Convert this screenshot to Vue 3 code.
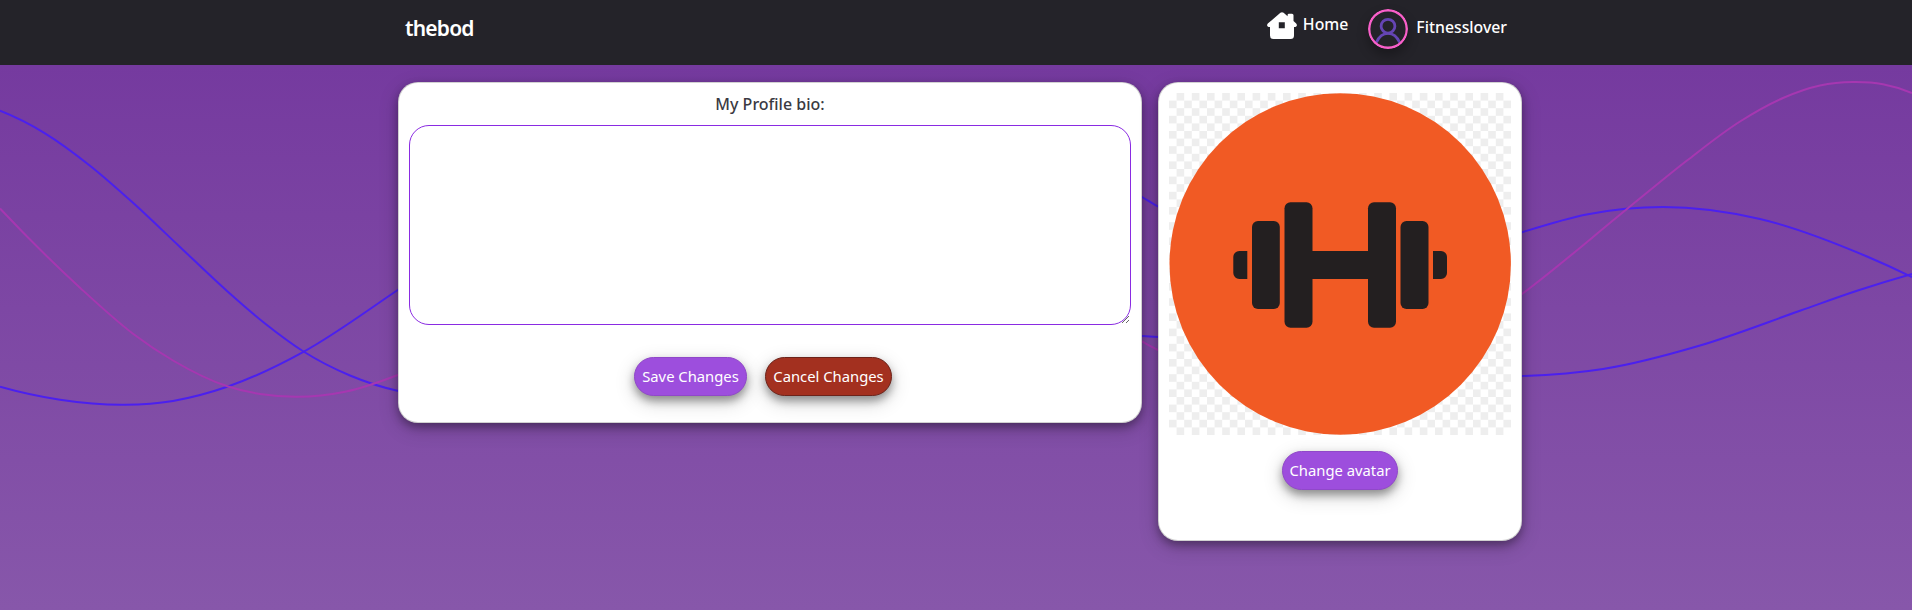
<script setup>
const waves = [
  { tone: 'blue', points: [[0, 110.7], [45, 133.3], [90, 165.7], [133, 202.800], [180, 247], [227, 291], [265, 323.5], [303.5, 351.5], [350, 375.5], [398.5, 391], [470, 396], [600, 370], [860, 330], [1000, 333], [1142, 336], [1158, 337], [1300, 352], [1440, 374], [1522, 376], [1603, 369], [1700, 345.5], [1800, 310.8], [1857, 290.800], [1912, 274]] },
  { tone: 'blue', points: [[0, 386.7], [60, 399.7], [125, 404.800], [173, 400.9], [228, 386.5], [303.5, 351.8], [398.5, 289.5], [500, 220], [700, 120], [900, 100], [1060, 152], [1142, 197], [1158, 206.5], [1250, 250], [1380, 270], [1470, 250], [1522, 232.3], [1588, 214.2], [1663, 207], [1760, 219], [1867, 256.500], [1912, 277]] },
  { tone: 'pink', points: [[0, 208.5], [80, 287.7], [133, 333.7], [173, 360.5], [228, 386.5], [260, 394], [297, 396.7], [345, 391.7], [398.5, 374.7], [520, 310], [700, 220], [900, 220], [1060, 295], [1142, 341.5], [1158, 350], [1260, 385], [1400, 370], [1470, 331], [1522, 294], [1627, 209], [1687, 160.5], [1740, 121.5], [1783, 98], [1820, 85.500], [1853, 82], [1883, 84.2], [1912, 93]] },
]

// Smooth curve through every point: one cubic per segment, tangents weighted by spacing.
function curve(p) {
  const n = p.length - 1
  const s = [], m = []
  for (let i = 0; i < n; i++) s.push((p[i + 1][1] - p[i][1]) / (p[i + 1][0] - p[i][0]))
  for (let i = 1; i < n; i++) {
    const l = p[i][0] - p[i - 1][0], r = p[i + 1][0] - p[i][0]
    m[i] = (s[i - 1] * r + s[i] * l) / (l + r)
  }
  m[0] = 2 * s[0] - m[1]
  m[n] = 2 * s[n - 1] - m[n - 1]
  let d = `M${p[0][0]} ${p[0][1]}`
  for (let i = 0; i < n; i++) {
    const [ax, ay] = p[i], [bx, by] = p[i + 1]
    const h = (bx - ax) / 3
    d += `C${ax + h} ${ay + m[i] * h} ${bx - h} ${by - m[i + 1] * h} ${bx} ${by}`
  }
  return d
}
</script>

<template>
  <div class="page">
    <svg class="waves" viewBox="0 0 1912 610" aria-hidden="true">
      <path v-for="(w, i) in waves" :key="i" :class="w.tone" :d="curve(w.points)" />
    </svg>
    <header class="nav">
      <div class="nav-inner">
        <a class="brand">thebod</a>
        <nav class="links">
          <a class="home">
            <svg width="30" height="28" viewBox="0 0 30 28" aria-hidden="true">
              <path fill="#fff" fill-rule="evenodd" d="M13.400 .8Q15 -.5 16.600 .8L20.600 4.200V3Q20.600 1.700 22 1.700H25Q26.500 1.700 26.500 3.200V9L29.200 11.600Q31 14 28.400 15H27V23.500Q27 27 23.500 27H6.500Q3 27 3 23.500V15H1.600Q-1 14 .8 11.600ZM11.800 10.300V16.300H17.800V10.300Z" />
            </svg>
            <span>Home</span>
          </a>
          <a class="user">
            <svg class="face" width="40" height="40" viewBox="0 0 40 40" aria-hidden="true">
              <circle cx="20" cy="20" r="18.800" fill="#242329" />
              <g fill="none" stroke="#6545b4" stroke-width="2.800">
                <circle cx="20" cy="17.200" r="6.900" />
                <path d="M8.300 33.500C11 27.500 15 24.300 20 24.300S29 27.500 31.700 33.500" />
              </g>
              <circle cx="20" cy="20" r="18.800" fill="none" stroke="#f95fc9" stroke-width="2.400" />
            </svg>
            <span>Fitnesslover</span>
          </a>
        </nav>
      </div>
    </header>
    <main class="cards">
      <section class="card bio">
        <label class="bio-label" for="bio">My Profile bio:</label>
        <textarea id="bio"></textarea>
        <div class="actions">
          <button class="btn save">Save Changes</button>
          <button class="btn cancel">Cancel Changes</button>
        </div>
      </section>
      <section class="card avatar">
        <svg class="picture" width="342" height="342" viewBox="0 0 342 342" aria-hidden="true">
          <defs>
            <pattern id="check" width="15.200" height="15.200" patternUnits="userSpaceOnUse">
              <rect width="15.200" height="15.200" fill="#fff" />
              <path fill="#eee" d="M7.600 0h7.600v7.600h-7.600zM0 7.600h7.600v7.600H0z" />
            </pattern>
          </defs>
          <rect width="342" height="342" fill="url(#check)" />
          <circle cx="171.200" cy="171" r="170.700" fill="#f15a24" />
          <g fill="#231f20">
            <path d="M78.300 158v28H70.300a6 6 0 0 1-6-6v-16a6 6 0 0 1 6-6zM264 158v28h8a6 6 0 0 0 6-6v-16a6 6 0 0 0-6-6z" />
            <rect x="83" y="128" width="27.800" height="88" rx="6" />
            <rect x="115.500" y="109.300" width="28" height="125.400" rx="6" />
            <rect x="199" y="109.300" width="28" height="125.400" rx="6" />
            <rect x="231.500" y="128" width="28" height="88" rx="6" />
            <rect x="140" y="158" width="62" height="28" />
          </g>
        </svg>
        <button class="btn change">Change avatar</button>
      </section>
    </main>
  </div>
</template>

<style>
body {
  margin: 0;
}
</style>

<style scoped>
.page {
  position: relative;
  height: 610px;
  overflow: hidden;
  background: linear-gradient(#753a9f 65px, #8757aa 610px);
  font-family: "Noto Sans", sans-serif;
}
.waves {
  position: absolute;
  inset: 0;
  width: 1912px;
  height: 610px;
}
.waves path {
  fill: none;
  stroke-width: 2;
}
.waves .blue {
  stroke: #4b20ee;
}
.waves .pink {
  stroke: #a637b1;
}
.nav {
  position: relative;
  height: 65px;
  background: #242329;
}
.nav-inner {
  display: flex;
  justify-content: space-between;
  width: 1102px;
  margin-left: 405px;
  color: #fff;
}
.brand {
  margin-top: 15px;
  font-size: 21px;
  line-height: 27px;
  font-weight: 600;
  letter-spacing: -0.8px;
}
.links {
  display: flex;
  align-items: flex-start;
}
.home {
  display: flex;
  gap: 6px;
  margin-top: 12px;
  font-size: 15.800px;
  line-height: 25px;
  font-weight: 500;
}
.user {
  display: flex;
  gap: 8px;
  margin: 9px 0 0 20px;
  font-size: 15.800px;
  line-height: 37px;
  font-weight: 500;
}
.face {
  border-radius: 50%;
  box-shadow: 0 6px 12px rgba(0, 0, 0, 0.3);
}
.cards {
  position: relative;
  display: flex;
  align-items: flex-start;
  gap: 16px;
  margin: 17px 0 0 398px;
}
.card {
  box-sizing: border-box;
  display: flex;
  flex-direction: column;
  align-items: center;
  border: 1px solid rgba(0, 0, 0, 0.18);
  border-radius: 20px;
  background: #fff;
  box-shadow: 0 4px 8px rgba(0, 0, 0, 0.3), 0 6px 20px rgba(0, 0, 0, 0.19);
}
.bio {
  width: 744px;
  height: 341px;
}
.bio-label {
  margin-top: 9px;
  color: #3a3a42;
  font-size: 16px;
  line-height: 25px;
  font-weight: 500;
}
textarea {
  box-sizing: border-box;
  width: 722px;
  height: 200px;
  margin: 8px 0 0;
  border: 1px solid #8a2be2;
  border-radius: 20px;
  background: #fff;
}
.actions {
  display: flex;
  gap: 18px;
  margin: 32px 14px 0 0;
}
.btn {
  box-sizing: border-box;
  height: 39px;
  padding: 0;
  border: 1px solid #9048c9;
  border-radius: 20px;
  background: #9d4edd;
  color: #fff;
  font-family: inherit;
  font-size: 14.800px;
  line-height: 35px;
  white-space: nowrap;
  box-shadow: 0 5px 8px rgba(0, 0, 0, 0.35), 0 6px 20px rgba(0, 0, 0, 0.19);
}
.save {
  width: 113px;
}
.cancel {
  width: 127px;
  border-color: #6d231a;
  background: #a3301f;
}
.avatar {
  width: 364px;
  height: 459px;
}
.picture {
  display: block;
  margin-top: 10px;
}
.change {
  width: 116px;
  margin-top: 16px;
}
</style>
